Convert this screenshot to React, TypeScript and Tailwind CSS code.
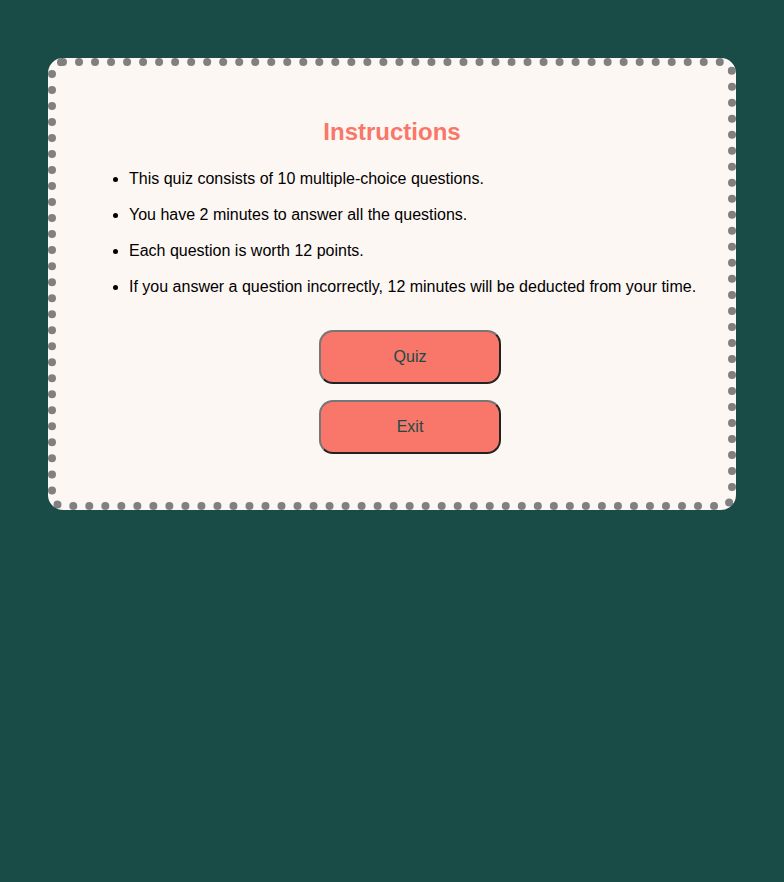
export default function App() {
  const items = [
    "This quiz consists of 10 multiple-choice questions.",
    "You have 2 minutes to answer all the questions.",
    "Each question is worth 12 points.",
    "If you answer a question incorrectly, 12 minutes will be deducted from your time.",
  ];
  return (
    <div className="min-h-[882px] w-full bg-[#194b47] pt-[58px] px-12 font-['Liberation_Sans',Arial,sans-serif]">
      <div className="h-[452px] rounded-[15px] border-8 border-dotted border-[#808080] bg-[#fdf7f4] pt-[52px]">
        <h1 className="text-center text-[24px] leading-[28px] font-bold text-[#f87768]">Instructions</h1>
        <ul className="mt-[24px] list-disc pl-[73px] text-[16px] leading-[18px] text-black">
          {items.map((t) => (
            <li key={t} className="mb-[18px]">{t}</li>
          ))}
        </ul>
        <div className="mt-[34px] flex flex-col items-center gap-4 pl-[36px]">
          {["Quiz", "Exit"].map((b) => (
            <button
              key={b}
              className="h-[54px] w-[182px] rounded-[14px] border-2 border-t-[#767676] border-l-[#767676] border-b-[#222] border-r-[#222] bg-[#f8766a] text-[16px] text-[#194b47]"
            >
              {b}
            </button>
          ))}
        </div>
      </div>
    </div>
  );
}
